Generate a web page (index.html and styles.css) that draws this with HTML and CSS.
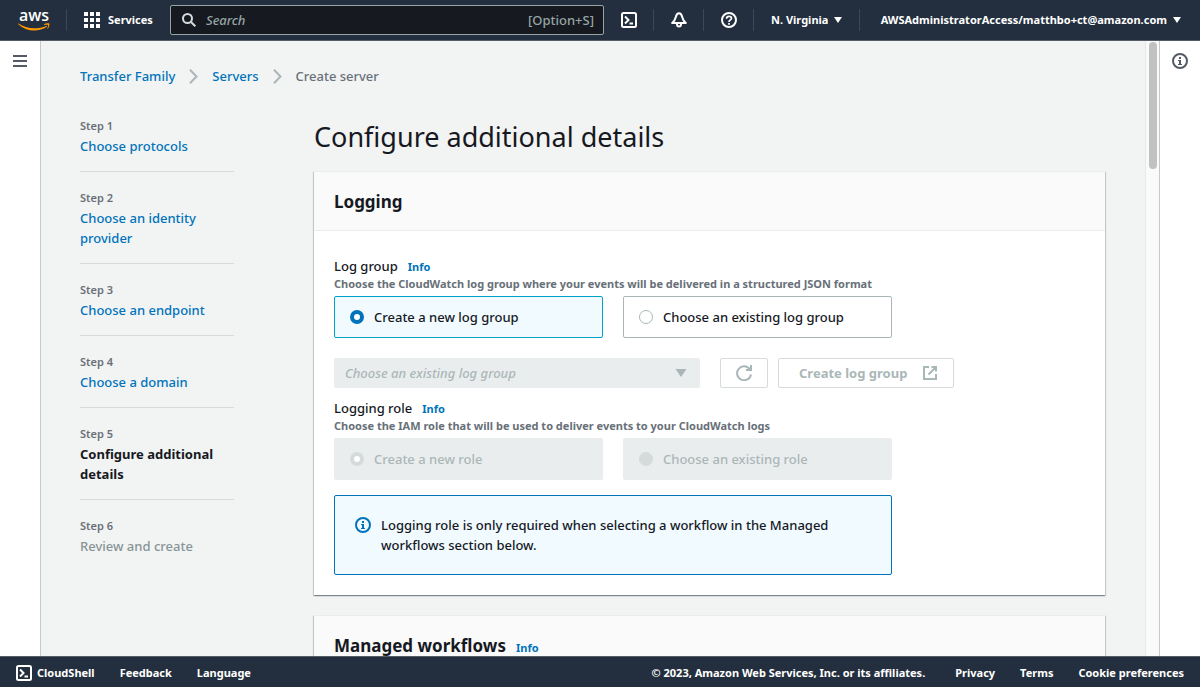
FILE: index.html
```html
<!DOCTYPE html>
<html lang="en">
<head>
<meta charset="utf-8">
<meta name="viewport" content="width=device-width, initial-scale=1">
<title>Create server - Transfer Family</title>
<link rel="stylesheet" href="styles.css">
</head>
<body>
<div class="app">
  <header class="topbar">
    <a class="logo" href="#" aria-label="AWS home">
      <svg width="32" height="38" viewBox="0 -8 32 38">
        <text class="logo-text" x="16" y="12" text-anchor="middle">aws</text>
        <path d="M.5 14.500C5 17.600 10.500 19.300 16.300 19.300c4 0 8.300-.9 12-2.400.6-.3 1.100.4.5.8-3.400 2.500-8.200 3.800-12.500 3.800C10.300 21.500 4.800 19.200.3 15.200c-.4-.4-.1-.9.2-.7z" fill="#f90"/>
        <path d="M26.200 15.100c1.500-1.100 4.700-1.100 5.100-.6.4.5-.1 3.900-1.600 5.300-.3.200-.5.1-.4-.2.400-1 1.100-3.100.8-3.600-.3-.4-2.500-.2-3.700-.1-.4 0-.5-.5-.2-.8z" fill="#f90"/>
      </svg>
    </a>
    <span class="sep"></span>
    <button class="services" type="button">
      <svg width="16" height="16" viewBox="0 0 16 16" fill="#fff"><path d="M0 0h4v4H0zM6 0h4v4H6zM12 0h4v4h-4zM0 6h4v4H0zM6 6h4v4H6zM12 6h4v4h-4zM0 12h4v4H0zM6 12h4v4H6zM12 12h4v4h-4z"/></svg>
      Services
    </button>
    <label class="search">
      <svg width="14" height="14" viewBox="0 0 14 14" fill="none" stroke="#d5dbdb" stroke-width="2"><circle cx="5.500" cy="5.500" r="4.500"/><path d="M9 9l4.300 4.300"/></svg>
      <input type="search" placeholder="Search" aria-label="Search">
      <span>[Option+S]</span>
    </label>
    <button class="icon-btn" type="button" aria-label="CloudShell">
      <svg width="16" height="16" viewBox="0 0 16 16" fill="none" stroke="#fff" stroke-width="2"><rect x="1" y="1" width="14" height="14" rx="1.500"/><path d="M4 4.500L7.500 8 4 11.500M8.500 11.500H12"/></svg>
    </button>
    <span class="sep"></span>
    <button class="icon-btn" type="button" aria-label="Notifications">
      <svg width="16" height="16" viewBox="0 0 16 16" fill="none" stroke="#fff" stroke-width="2" stroke-linejoin="round"><path d="M8 1.300C6 1.300 5.300 3 4.800 5 4.300 7.300 3.400 9 1.200 11h13.600c-2.200-2-3.100-3.700-3.600-6C10.700 3 10 1.300 8 1.300z"/><path d="M6 11.500v1a2 2 0 0 0 4 0v-1"/></svg>
    </button>
    <span class="sep"></span>
    <button class="icon-btn" type="button" aria-label="Support">
      <svg width="16" height="16" viewBox="0 0 16 16" fill="none" stroke="#fff" stroke-width="2"><circle cx="8" cy="8" r="7"/><path d="M5.500 6.800C5.500 5 6.500 4.300 8 4.300s2.500.8 2.500 2C10.500 7.900 8 7.900 8 10M8 11v1.800" stroke-width="1.700"/></svg>
    </button>
    <span class="sep"></span>
    <button class="menu-btn" type="button">N. Virginia <i class="caret"></i></button>
    <span class="sep"></span>
    <button class="menu-btn" type="button">AWSAdministratorAccess/matthbo+ct@amazon.com <i class="caret"></i></button>
  </header>

  <div class="workspace">
    <aside class="rail rail-left">
      <button class="icon-btn" type="button" aria-label="Open navigation">
        <svg width="14" height="12" viewBox="0 0 14 12" fill="#545b64"><path d="M0 0h14v2H0zM0 5h14v2H0zM0 10h14v2H0z"/></svg>
      </button>
    </aside>

    <main class="content">
      <nav class="crumbs" aria-label="Breadcrumbs">
        <a href="#">Transfer Family</a>
        <svg width="9" height="15" viewBox="0 0 9 15"><path d="M1 .8l6.500 6.700L1 14.200"/></svg>
        <a href="#">Servers</a>
        <svg width="9" height="15" viewBox="0 0 9 15"><path d="M1 .8l6.500 6.700L1 14.200"/></svg>
        <span>Create server</span>
      </nav>

      <div class="wizard">
        <ol class="steps">
          <li><small>Step 1</small><a href="#">Choose protocols</a></li>
          <li><small>Step 2</small><a href="#">Choose an identity provider</a></li>
          <li><small>Step 3</small><a href="#">Choose an endpoint</a></li>
          <li><small>Step 4</small><a href="#">Choose a domain</a></li>
          <li><small>Step 5</small><strong>Configure additional details</strong></li>
          <li><small>Step 6</small><span>Review and create</span></li>
        </ol>

        <div class="panels">
          <h1>Configure additional details</h1>

          <section class="card">
            <div class="card-head"><h2>Logging</h2></div>
            <div class="card-body">
              <div class="form">
                <div class="field-label" id="lg">Log group <a class="info" href="#">Info</a></div>
                <p class="hint">Choose the CloudWatch log group where your events will be delivered in a structured JSON format</p>
                <div class="tiles" role="radiogroup" aria-labelledby="lg">
                  <label class="tile selected"><input type="radio" name="log-group" checked>Create a new log group</label>
                  <label class="tile"><input type="radio" name="log-group">Choose an existing log group</label>
                </div>
              </div>

              <div class="picker">
                <div class="select">
                  <select disabled aria-label="Existing log group"><option>Choose an existing log group</option></select>
                  <svg width="12" height="8" viewBox="0 0 12 8"><path d="M.5 0h11L6 8z" fill="#aab7b8"/></svg>
                </div>
                <button class="btn btn-refresh" type="button" disabled aria-label="Refresh">
                  <svg width="16" height="16" viewBox="0 0 16 16" fill="none" stroke="#aab7b8" stroke-width="2"><path d="M15 9.500A7 7 0 1 1 13.800 4.200M15 0v5h-5"/></svg>
                </button>
                <button class="btn btn-create" type="button" disabled>
                  Create log group
                  <svg width="16" height="16" viewBox="0 0 16 16" fill="none" stroke="#aab7b8" stroke-width="2"><path d="M7 2H2v12h12V9M9.500 2H14v4.500M14 2L6.500 9.500"/></svg>
                </button>
              </div>

              <div class="form">
                <div class="field-label" id="lr">Logging role <a class="info" href="#">Info</a></div>
                <p class="hint">Choose the IAM role that will be used to deliver events to your CloudWatch logs</p>
                <div class="tiles" role="radiogroup" aria-labelledby="lr">
                  <label class="tile disabled"><input type="radio" name="role" checked disabled>Create a new role</label>
                  <label class="tile disabled"><input type="radio" name="role" disabled>Choose an existing role</label>
                </div>
                <div class="alert">
                  <svg width="16" height="16" viewBox="0 0 16 16"><circle cx="8" cy="8" r="7" fill="none" stroke="#0073bb" stroke-width="2"/><path d="M7 4h2v2H7zM6 7h3v4h1v1H6v-1h1V8H6z" fill="#0073bb"/></svg>
                  <p>Logging role is only required when selecting a workflow in the Managed workflows section below.</p>
                </div>
              </div>
            </div>
          </section>

          <section class="card">
            <div class="card-head"><h2>Managed workflows</h2><a class="info" href="#">Info</a></div>
          </section>
        </div>
      </div>
    </main>

    <div class="track"><div class="thumb"></div></div>

    <aside class="rail rail-right">
      <button class="icon-btn" type="button" aria-label="Open help">
        <svg width="16" height="16" viewBox="0 0 16 16"><circle cx="8" cy="8" r="7" fill="none" stroke="#545b64" stroke-width="2"/><path d="M7 4h2v2H7zM6 7h3v4h1v1H6v-1h1V8H6z" fill="#545b64"/></svg>
      </button>
    </aside>
  </div>

  <footer class="footer">
    <a class="shell" href="#">
      <svg width="16" height="16" viewBox="0 0 16 16" fill="none" stroke="#fff" stroke-width="2"><rect x="1" y="1" width="14" height="14" rx="1.500"/><path d="M4 4.500L7.500 8 4 11.500M8.500 11.500H12"/></svg>
      CloudShell
    </a>
    <a href="#">Feedback</a>
    <a href="#">Language</a>
    <span class="copy">© 2023, Amazon Web Services, Inc. or its affiliates.</span>
    <a href="#">Privacy</a>
    <a href="#">Terms</a>
    <a href="#">Cookie preferences</a>
  </footer>
</div>
</body>
</html>
```
FILE: styles.css
```css
* {
  box-sizing: border-box;
}

body {
  margin: 0;
  color: #16191f;
  font: 500 13px/20px "Noto Sans", "Open Sans", sans-serif;
}

button {
  padding: 0;
  border: 0;
  background: none;
  color: inherit;
  font: inherit;
}

a {
  color: #0073bb;
  text-decoration: none;
}

h1, h2, p, ol {
  margin: 0;
  padding: 0;
}

svg {
  display: block;
  flex: none;
}

.app {
  display: flex;
  flex-direction: column;
  height: 100vh;
}

/* Top bar */
.topbar {
  display: flex;
  align-items: center;
  flex: none;
  height: 41px;
  padding: 0 19px 0 18px;
  border-bottom: 1px solid #545b64;
  background: #232f3e;
  color: #fff;
  font-size: 11px;
  font-weight: 700;
  white-space: nowrap;
}

.logo {
  margin-right: 16px;
}

.logo-text {
  fill: #fff;
  font-family: "Open Sans", sans-serif;
  font-size: 16px;
  font-weight: 600;
}

.sep {
  width: 1px;
  height: 22px;
  background: #414750;
}

.services {
  display: flex;
  align-items: center;
  gap: 8px;
  width: 86px;
  margin-left: 17px;
}

.search {
  display: flex;
  align-items: center;
  flex: 0 1 434px;
  gap: 10px;
  height: 30px;
  margin-right: 17px;
  padding: 0 9px 0 11px;
  border: 1px solid #95a5a6;
  border-radius: 2px;
  background: #16191f;
  color: #95a5a6;
  font-size: 13px;
  font-weight: 500;
}

.search input {
  flex: 1;
  min-width: 0;
  padding: 0;
  border: 0;
  outline: 0;
  background: none;
  color: #fff;
  font: inherit;
}

.search input::placeholder {
  color: #95a5a6;
  font-style: italic;
}

.topbar > .icon-btn {
  margin: 0 16px 0 17px;
}

.topbar .search + .icon-btn {
  margin-left: 0;
}

.menu-btn {
  display: flex;
  align-items: center;
  gap: 6px;
  margin: 0 17px;
}

.menu-btn:last-child {
  margin: 0 0 0 auto;
}

.caret {
  border: 4px solid transparent;
  border-top: 6px solid #fff;
  border-bottom: 0;
}

/* Work area */
.workspace {
  display: flex;
  flex: 1;
  min-height: 0;
}

.rail {
  display: flex;
  justify-content: center;
  align-items: flex-start;
  flex: none;
  width: 41px;
  background: #fff;
}

.rail-left {
  padding-top: 14px;
  border-right: 1px solid #c4c9ca;
}

.rail-right {
  padding-top: 12px;
  border-left: 1px solid #c4c9ca;
}

.content {
  flex: 1;
  min-width: 0;
  overflow: hidden;
  padding: 25px 40px 0 39px;
  background: #f2f3f3;
}

.track {
  flex: none;
  width: 14px;
  padding: 1px 2px 0 3px;
  border-left: 1px solid #e8e8e8;
  background: #fafafa;
}

.thumb {
  height: 127px;
  border-radius: 4px;
  background: #c1c1c1;
}

.crumbs {
  display: flex;
  align-items: center;
  gap: 14px;
  color: #687078;
}

.crumbs svg {
  fill: none;
  stroke: #aab7b8;
  stroke-width: 2;
}

.wizard {
  display: grid;
  grid-template-columns: 154px minmax(0, 1fr);
  gap: 80px;
  margin-top: 30px;
}

.steps {
  list-style: none;
}

.steps li {
  display: flex;
  flex-direction: column;
  padding: 16px 0 15px;
  border-bottom: 1px solid #d5dbdb;
}

.steps li:first-child {
  padding-top: 0;
}

.steps li:last-child {
  border-bottom: 0;
}

.steps small {
  color: #687078;
  font-size: 11px;
  font-weight: 600;
}

.steps span {
  color: #879596;
}

h1 {
  font-size: 27px;
  font-weight: 400;
  line-height: 40px;
}

.panels {
  display: flex;
  flex-direction: column;
  gap: 20px;
}

.panels h1 {
  margin-bottom: -6px;
  padding-top: 1px;
}

.card {
  border-top: 1px solid #eaeded;
  background: #fff;
  box-shadow: 0 1px 1px 0 rgba(0, 28, 36, 0.3), 1px 1px 1px 0 rgba(0, 28, 36, 0.15), -1px 1px 1px 0 rgba(0, 28, 36, 0.15);
}

.card-head {
  display: flex;
  align-items: baseline;
  gap: 10px;
  padding: 19px 20px 17px;
  border-bottom: 1px solid #eaeded;
  background: #fafafa;
}

h2 {
  font-size: 17px;
  line-height: 22px;
}

.card-body {
  padding: 25px 20px 20px;
}

.info {
  font-size: 11px;
  font-weight: 700;
}

.form {
  max-width: 558px;
}

.field-label {
  display: flex;
  align-items: baseline;
  gap: 10px;
}

.hint {
  color: #687078;
  font-size: 11px;
  font-weight: 700;
  line-height: 14px;
  white-space: nowrap;
}

.tiles {
  display: grid;
  grid-template-columns: 1fr 1fr;
  gap: 20px;
  margin-top: 5px;
}

.tile {
  display: flex;
  align-items: center;
  gap: 10px;
  height: 42px;
  padding: 0 15px;
  border: 1px solid #aab7b8;
  border-radius: 2px;
}

.tile.selected {
  border-color: #00a1c9;
  background: #f1faff;
}

.tile.disabled {
  border-color: #eaeded;
  background: #eaeded;
  color: #aab7b8;
}

.tile input {
  appearance: none;
  width: 14px;
  height: 14px;
  margin: 0;
  border: 1px solid #aab7b8;
  border-radius: 50%;
  background: #fff;
}

.tile input:checked {
  border: 4px solid #0073bb;
}

.tile input:disabled {
  border-color: #d5dbdb;
  background: #d5dbdb;
}

.tile input:disabled:checked {
  background: #fff;
}

.picker {
  display: flex;
  margin: 20px 0 10px;
}

.select {
  position: relative;
  flex: 0 1 366px;
}

.select select {
  appearance: none;
  display: block;
  width: 100%;
  height: 30px;
  padding: 0 30px 0 11px;
  border: 0;
  border-radius: 2px;
  background: #eaeded;
  color: #aab7b8;
  font: inherit;
  font-style: italic;
  opacity: 1;
}

.select svg {
  position: absolute;
  top: 11px;
  right: 13px;
}

.btn {
  display: flex;
  justify-content: center;
  align-items: center;
  height: 30px;
  border: 1px solid #d5dbdb;
  border-radius: 2px;
  background: #fff;
  color: #aab7b8;
  font-weight: 700;
}

.btn-refresh {
  width: 48px;
  margin: 0 10px 0 20px;
}

.btn-create {
  justify-content: space-between;
  width: 176px;
  padding: 0 15px 0 20px;
}

.alert {
  display: flex;
  gap: 10px;
  margin-top: 15px;
  padding: 19px 20px;
  border: 1px solid #0073bb;
  border-radius: 2px;
  background: #f1faff;
}

.alert svg {
  margin-top: 2px;
}

/* Footer */
.footer {
  display: flex;
  align-items: center;
  flex: none;
  gap: 25px;
  height: 31px;
  padding: 2px 16px 0;
  border-top: 1px solid #545b64;
  background: #232f3e;
  color: #fff;
  font-size: 11px;
  font-weight: 700;
  white-space: nowrap;
}

.footer a {
  color: inherit;
}

.shell {
  display: flex;
  align-items: center;
  gap: 5px;
}

.copy {
  margin: 0 5px 0 auto;
}
```
